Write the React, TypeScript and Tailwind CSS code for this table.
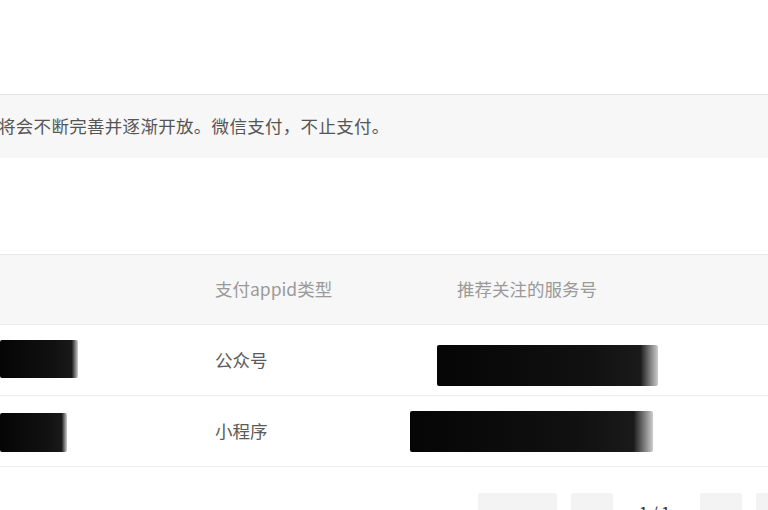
const rows = [
  { type: "公众号", left: "w-[78px] h-[38px] mt-[-2px]", right: "w-[221px] h-[41px] ml-[-20px] translate-y-[5px]" },
  { type: "小程序", left: "w-[67px] h-[39px] mt-[2px]", right: "w-[243px] h-[41px] ml-[-47px]" },
];

// redacted block, soft brush edge on the right
function Blot({ className }: { className: string }) {
  return (
    <div
      className={`${className} rounded-[2px] bg-[linear-gradient(to_right,#050505_0%,#111_70%,#1a1a1a_92%,rgba(0,0,0,0.2)_100%)] blur-[0.6px]`}
    />
  );
}

export default function App() {
  return (
    <div className="h-[510px] w-[768px] overflow-hidden bg-white font-['Noto_Sans_CJK_SC','Noto_Sans',sans-serif] text-[17.5px]">
      <div className="h-[94px]" />
      <div className="flex h-[64px] items-center border-t border-[#e4e4e4] bg-[#f7f7f7] text-[#555]">
        <p className="-ml-[2px] whitespace-nowrap tracking-[0.3px]">将会不断完善并逐渐开放。微信支付，不止支付。</p>
      </div>
      <div className="h-[96px]" />

      <div className="grid h-[70px] grid-cols-[215px_242px_1fr] items-center border-t border-[#e6e6e6] bg-[#f7f7f7] text-[#9a9a9a]">
        <div />
        <div>支付appid类型</div>
        <div>推荐关注的服务号</div>
      </div>
      {rows.map((r) => (
        <div
          key={r.type}
          className="grid h-[71px] grid-cols-[215px_242px_1fr] items-center border-t border-[#ececec] text-[#5a5a5a]"
        >
          <div className="flex">
            <Blot className={r.left} />
          </div>
          <div>{r.type}</div>
          <div className="flex">
            <Blot className={r.right} />
          </div>
        </div>
      ))}
      <div className="border-t border-[#ececec]" />

      <div className="mt-[26px] flex items-start text-[#333]">
        <button className="ml-[478px] h-[40px] w-[79px] shrink-0 rounded-[3px] bg-[#f3f3f3] pt-[7px] text-[16px]">首页</button>
        <button className="ml-[14px] h-[40px] w-[42px] shrink-0 rounded-[3px] bg-[#f3f3f3] pt-[7px] text-[16px] text-[#666]">‹</button>
        <span className="w-[87px] shrink-0 whitespace-nowrap pl-[26px] pt-[7px] text-[16px]">1 / 1</span>
        <button className="h-[40px] w-[42px] shrink-0 rounded-[3px] bg-[#f3f3f3] pt-[7px] text-[16px] text-[#666]">›</button>
        <button className="ml-[14px] h-[40px] w-[42px] shrink-0 rounded-[3px] bg-[#f3f3f3]" />
      </div>
    </div>
  );
}
